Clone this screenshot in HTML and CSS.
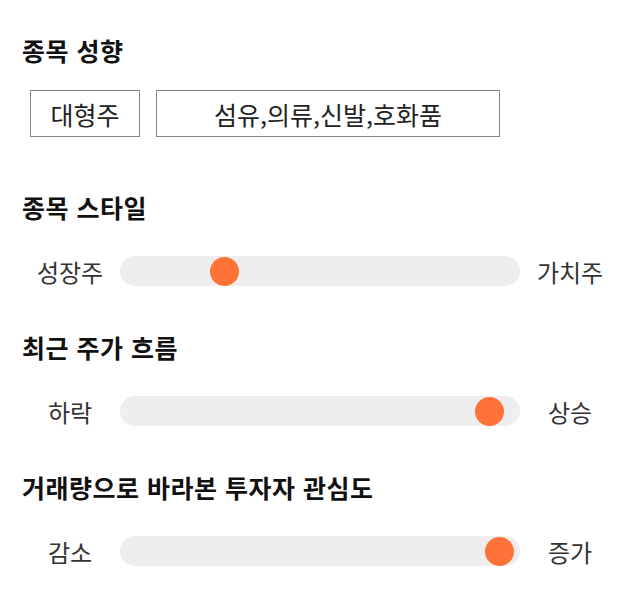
FILE: index.html
```html
<!DOCTYPE html>
<html lang="ko">
<head>
    <meta charset="UTF-8">
    <meta name="viewport" content="width=device-width, initial-scale=1.0">
    <title>종목 분석</title>
    <link rel="stylesheet" href="styles.css">
</head>
<body>
    <div class="container">
        <div class="section section-tags">
            <h3 class="title">종목 성향</h3>
            <div class="tags">
                <span class="tag">대형주</span>
                <span class="tag tag-wide">섬유,의류,신발,호화품</span>
            </div>
        </div>

        <div class="section">
            <h3 class="title">종목 스타일</h3>
            <div class="slider">
                <span class="label">성장주</span>
                <div class="track">
                    <div class="thumb" style="left: 26%"></div>
                </div>
                <span class="label">가치주</span>
            </div>
        </div>

        <div class="section">
            <h3 class="title">최근 주가 흐름</h3>
            <div class="slider">
                <span class="label">하락</span>
                <div class="track">
                    <div class="thumb" style="left: 92.3%"></div>
                </div>
                <span class="label">상승</span>
            </div>
        </div>

        <div class="section">
            <h3 class="title">거래량으로 바라본 투자자 관심도</h3>
            <div class="slider">
                <span class="label">감소</span>
                <div class="track">
                    <div class="thumb" style="left: 94.9%"></div>
                </div>
                <span class="label">증가</span>
            </div>
        </div>
    </div>
</body>
</html>
```

FILE: styles.css
```css
* {
    margin: 0;
    padding: 0;
    box-sizing: border-box;
}
body {
    font-family: "Noto Sans CJK KR", "Noto Sans", sans-serif;
    background-color: white;
    color: #222;
}
.container {
    padding: 35px 20px 0 20px;
}
.section {
    margin-bottom: 46px;
}
.section.section-tags {
    margin-bottom: 55px;
}
.section .title {
    font-size: 25px;
    line-height: 30px;
    font-weight: bold;
    letter-spacing: 0.5px;
    color: #111;
    margin-left: 2px;
    margin-bottom: 34px;
}
.section-tags .title {
    margin-bottom: 25px;
}
.tags {
    display: flex;
    gap: 16px;
    margin-left: 10px;
}
.tags .tag {
    display: flex;
    align-items: center;
    justify-content: center;
    height: 47px;
    border: 1px solid #888;
    font-size: 25px;
    color: #222;
    width: 110px;
}
.tags .tag.tag-wide {
    width: 344px;
}
.slider {
    display: flex;
    align-items: center;
    height: 30px;
}
.slider .label {
    width: 100px;
    text-align: center;
    font-size: 24px;
    color: #333;
}
.slider .track {
    flex: 1;
    height: 30px;
    border-radius: 15px;
    background-color: #eeeeee;
    position: relative;
}
.slider .track .thumb {
    position: absolute;
    top: 0.5px;
    width: 29px;
    height: 29px;
    margin-left: -14.5px;
    border-radius: 50%;
    background-color: #ff7338;
}
```
